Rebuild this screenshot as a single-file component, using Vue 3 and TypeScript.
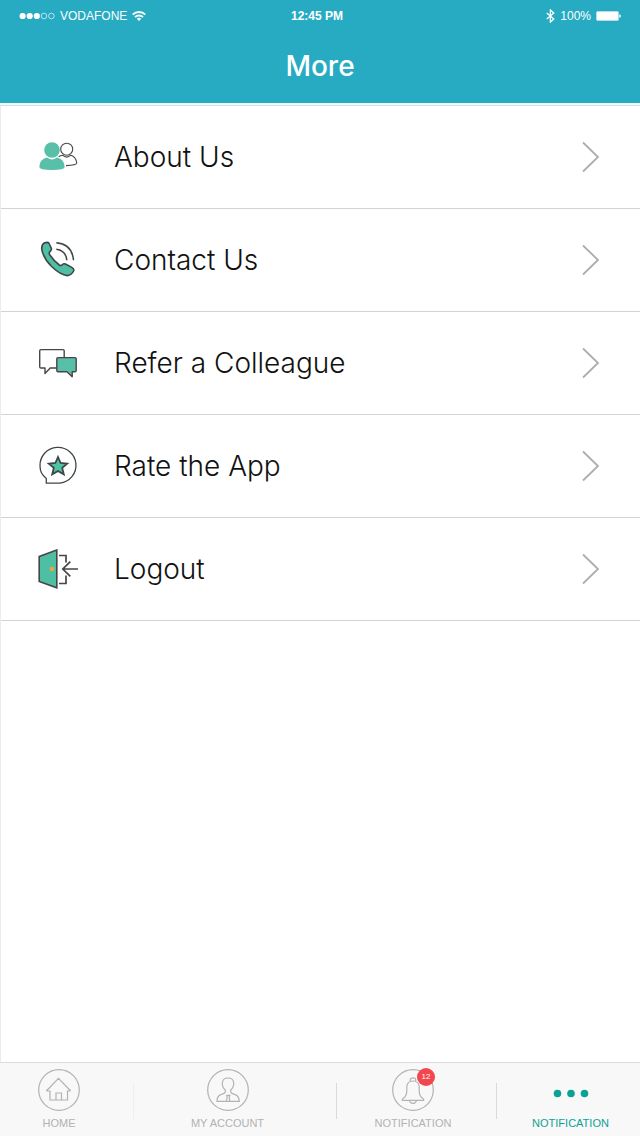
<script setup lang="ts">
import { ref } from 'vue'

type IconName = 'people' | 'phone' | 'chat' | 'star' | 'door'
type TabIcon = 'home' | 'account' | 'bell' | 'more'

interface MenuItem {
  label: string
  icon: IconName
}

interface Tab {
  id: string
  label: string
  icon: TabIcon
  badge?: number
}

const menu: MenuItem[] = [
  { label: 'About Us', icon: 'people' },
  { label: 'Contact Us', icon: 'phone' },
  { label: 'Refer a Colleague', icon: 'chat' },
  { label: 'Rate the App', icon: 'star' },
  { label: 'Logout', icon: 'door' },
]

const tabs: Tab[] = [
  { id: 'home', label: 'HOME', icon: 'home' },
  { id: 'account', label: 'MY ACCOUNT', icon: 'account' },
  { id: 'notification', label: 'NOTIFICATION', icon: 'bell', badge: 12 },
  { id: 'more', label: 'NOTIFICATION', icon: 'more' },
]

const activeTab = ref<string>('more')
</script>

<template>
  <div class="screen">
    <header class="header">
      <div class="status">
        <div class="status-side">
          <svg class="signal" width="36" height="8" viewBox="0 0 36 8" aria-hidden="true">
            <g fill="#fff">
              <circle cx="3.6" cy="4" r="3.1" />
              <circle cx="10.7" cy="4" r="3.1" />
              <circle cx="17.8" cy="4" r="3.1" />
            </g>
            <g fill="none" stroke="#d5f3f8" stroke-width="0.8">
              <circle cx="25" cy="4" r="2.8" />
              <circle cx="32.4" cy="4" r="2.8" />
            </g>
          </svg>
          <span>VODAFONE</span>
          <svg width="14" height="10" viewBox="0 0 14 10" aria-hidden="true">
            <g fill="none" stroke="#fff" stroke-width="1.9">
              <path d="M0.7 3.7 C4.2 0.1 9.8 0.1 13.3 3.7" />
              <path d="M3 6.2 C5.2 3.9 8.8 3.9 11 6.2" />
            </g>
            <path d="M4.8 7.7 Q7 5.9 9.2 7.7 L7 10 Z" fill="#fff" />
          </svg>
        </div>
        <time class="clock">12:45 PM</time>
        <div class="status-side status-end">
          <svg width="9" height="14" viewBox="0 0 9 14" aria-hidden="true">
            <path d="M0.8 4 L7.8 10 L4.4 13 V1 L7.8 4 L0.8 10" fill="none" stroke="#fff" stroke-width="1.3" />
          </svg>
          <span>100%</span>
          <svg width="25" height="10" viewBox="0 0 25 10" aria-hidden="true">
            <rect x="0.5" y="0.5" width="22" height="9" rx="1" fill="#fff" stroke="#b9e6ee" stroke-width="0.7" />
            <path d="M23.3 3.2 Q25 3.6 25 5 Q25 6.4 23.3 6.8 Z" fill="#fff" />
          </svg>
        </div>
      </div>
      <h1 class="title">More</h1>
    </header>

    <main class="content">
      <ul class="menu">
        <li v-for="item in menu" :key="item.label">
          <button type="button" class="row">
            <svg class="row-icon" width="40" height="40" viewBox="0 0 40 40" aria-hidden="true">
              <g v-if="item.icon === 'people'">
                <g fill="none" stroke="#4a4a4a" stroke-width="1.1">
                  <circle cx="28.7" cy="12.2" r="6" />
                  <path d="M20.7 19.7 Q22.4 18.4 24.5 18.2 Q28.7 22 32.8 18.2 Q37.8 19.4 38.8 26 Q38.7 28.2 28 28.6" />
                </g>
                <path
                  d="M1.3 30 Q1.4 22.2 9.2 20.6 Q14 24.4 18.9 20.6 Q26.4 22.2 26.7 30 Q26.7 32.9 14 32.9 Q1.3 32.9 1.3 30 Z"
                  fill="#58bfa8"
                  stroke="#fff"
                  stroke-width="1"
                  paint-order="stroke"
                />
                <circle cx="14" cy="13" r="7.8" fill="#58bfa8" />
              </g>
              <g v-else-if="item.icon === 'phone'" stroke="#3f4649" stroke-linejoin="round">
                <path
                  d="M6.7 2.8 L9.2 2.4 Q10.8 2.4 11.5 4.2 L13.4 8.5 Q13.8 9.8 12.4 11.2 Q10.6 12.8 11.5 14.5 Q15.5 20.5 21.3 25 Q22.7 26 24.2 24.8 Q25.8 23.2 27.4 24 L33.8 27.4 Q36.5 28.9 35.6 31 Q33.5 35 29.4 35.6 Q22.5 35 13.6 26.5 Q4.7 17.5 3.7 8.6 Q3.6 4.4 6.7 2.8 Z"
                  fill="#4fbfa3"
                  stroke-width="1.6"
                />
                <path d="M18.3 9.2 Q28 10.4 28.8 20.3 M18.3 2.8 Q34.2 4.2 35.5 20.3" fill="none" stroke-width="1.5" />
              </g>
              <g v-else-if="item.icon === 'chat'" stroke="#4b4447" stroke-width="1.4" stroke-linejoin="round">
                <path d="M19 25 H12.2 L7 30.4 V25 H3 Q1.7 25 1.7 23.7 V7.7 Q1.7 6.6 3 6.6 H25 Q26.2 6.6 26.2 7.7 V14.4" fill="none" />
                <path
                  d="M20 14.6 H37 Q38.2 14.6 38.2 15.8 V27.4 Q38.2 28.7 37 28.7 H34.2 V33.7 L29 28.7 H20 Q18.8 28.7 18.8 27.4 V15.8 Q18.8 14.6 20 14.6 Z"
                  fill="#58bfa8"
                />
              </g>
              <g v-else-if="item.icon === 'star'" stroke="#3f4649">
                <path d="M8.3 37.2 V32.4 Q2 27.7 2 20 A18 18 0 1 1 22 37.2 Z" fill="none" stroke-width="1.3" />
                <path
                  d="M20 11 L22.6 17 L29.2 17.6 L24.2 21.9 L25.8 28.4 L20 25 L14.2 28.4 L15.8 21.9 L10.8 17.6 L17.4 17 Z"
                  fill="#4fc3a4"
                  stroke-width="1.8"
                />
              </g>
              <g v-else stroke="#474446">
                <path d="M1.2 7.4 L18.8 1 V38.8 L1.2 32.5 Z" fill="#4fbfa3" stroke-width="1.6" />
                <circle cx="14" cy="20" r="2.3" fill="#efa33c" stroke="none" />
                <path
                  d="M21 6.5 H28 V13.5 M21 34.5 H28 V26.5 M40 20 H25.5 M32.3 12.6 L24.8 20 L32.3 27.3"
                  fill="none"
                  stroke-width="1.7"
                />
              </g>
            </svg>
            <span class="row-label">{{ item.label }}</span>
            <svg class="chevron" width="18" height="32" viewBox="0 0 18 32" aria-hidden="true">
              <path d="M1 1.5 L16 16 L1 30.5" fill="none" stroke="#adadad" stroke-width="1.8" />
            </svg>
          </button>
        </li>
      </ul>
    </main>

    <nav class="tabbar" aria-label="Main">
      <ul class="tabs">
        <li v-for="tab in tabs" :key="tab.id" class="tab-cell">
          <button
            type="button"
            class="tab"
            :class="{ active: activeTab === tab.id }"
            :aria-current="activeTab === tab.id ? 'page' : undefined"
            @click="activeTab = tab.id"
          >
            <span class="tab-icon">
              <svg width="42" height="42" viewBox="0 0 42 42" aria-hidden="true">
                <g v-if="tab.icon === 'more'" fill="currentColor">
                  <circle cx="7.5" cy="24.5" r="3.8" />
                  <circle cx="21" cy="24.5" r="3.8" />
                  <circle cx="34.5" cy="24.5" r="3.8" />
                </g>
                <g v-else fill="none" stroke="currentColor" stroke-width="1.2">
                  <circle cx="21" cy="21" r="20.3" />
                  <path
                    v-if="tab.icon === 'home'"
                    d="M9.3 21 L20.5 9.3 L31.7 21 M9 20 V22 H12 V31 H29.5 V22 H32 V20 M18 31 V24 H23.5 V31"
                  />
                  <path
                    v-else-if="tab.icon === 'account'"
                    d="M18.3 22.9 V21 C16.5 19.5 15.2 17 15.3 14 C15.5 10.8 17.8 9 21 9 C24.3 9 26.6 10.8 26.7 14 C26.8 17 25.5 19.5 23.7 21 V22.9 Q24.4 24.6 28.2 25.6 Q32 27 32.3 32.3 H10 Q10 27 13.8 25.6 Q17.6 24.6 18.3 22.9 Z M19.5 26.3 H22.9 L22.2 28.3 L22.9 32 M19.5 26.3 L20.2 28.3 L19.5 32"
                  />
                  <path
                    v-else
                    d="M18.3 12.2 Q17.7 8.8 21 8.8 Q24.3 8.8 23.7 12.2 M10.3 31.4 Q10 29.9 11.3 29.3 Q14.6 27.2 14.8 22 V18 C15 13.8 17.5 12 21 12 C24.5 12 27 13.8 27.2 18 V22 Q27.4 27.2 30.7 29.3 Q32 29.9 31.7 31.4 Z M17.7 31.8 Q18 34.4 21 34.4 Q24 34.4 24.3 31.8"
                  />
                </g>
              </svg>
              <span v-if="tab.badge" class="badge">{{ tab.badge }}</span>
            </span>
            <span class="tab-label">{{ tab.label }}</span>
          </button>
        </li>
      </ul>
    </nav>
  </div>
</template>

<style>
body {
  margin: 0;
  background: #fff;
}
</style>

<style scoped>
.screen {
  display: flex;
  flex-direction: column;
  min-height: 100vh;
  background: #fff;
  font-family: 'Liberation Sans', Arial, sans-serif;
}

ul {
  margin: 0;
  padding: 0;
  list-style: none;
}

button {
  margin: 0;
  border: 0;
  background: none;
  font: inherit;
  color: inherit;
  cursor: pointer;
}

svg {
  display: block;
  flex: none;
}

.header {
  padding-bottom: 16px;
  border-bottom: 1px solid #d3e0e6;
  background: #26abc3;
  box-shadow: inset 0 -2px #f3fafc;
  color: #fff;
}

.status {
  display: grid;
  grid-template-columns: 1fr auto 1fr;
  align-items: center;
  height: 32px;
  padding: 0 19px;
  font-size: 12px;
  line-height: 16px;
}

.status-side {
  display: flex;
  align-items: center;
  gap: 5px;
}

.status-end {
  justify-content: flex-end;
}

.clock {
  padding-right: 6px;
  font-weight: 700;
}

.title {
  margin: 18px 0 6px;
  font-family: Inter, sans-serif;
  font-size: 28px;
  font-weight: 500;
  line-height: 33px;
  text-align: center;
}

.content {
  flex: 1;
  border-left: 1px solid #ececec;
}

.row {
  display: flex;
  align-items: center;
  width: 100%;
  height: 103px;
  padding: 0 40px 0 37px;
  border-bottom: 1px solid #d3d3d3;
  text-align: left;
}

.row-label {
  flex: 1;
  padding-left: 36px;
  color: #111;
  font-family: Inter, sans-serif;
  font-size: 28px;
  font-weight: 300;
  line-height: 36px;
}

.tabbar {
  border-top: 1px solid #dcdcdc;
  background: #f8f8f8;
}

.tabs {
  display: grid;
  grid-template-columns: 134fr 203fr 160fr 143fr;
  height: 73px;
}

.tab-cell {
  display: flex;
  padding-right: 16px;
  background: linear-gradient(#dadada, #dadada) right 20px / 1px 36px no-repeat;
}

.tab-cell:first-child {
  background-image: linear-gradient(#eee, #eee);
}

.tab-cell:nth-child(3) {
  padding-right: 8px;
}

.tab-cell:last-child {
  padding: 0 0 0 4px;
  background: none;
}

.tab {
  display: flex;
  flex: 1;
  flex-direction: column;
  align-items: center;
  gap: 5px;
  padding: 6px 0 0;
  color: #b2b2b2;
}

.tab.active {
  color: #0ba296;
}

.tab-icon {
  position: relative;
}

.tab-label {
  font-size: 11px;
  line-height: 14px;
  white-space: nowrap;
}

.badge {
  position: absolute;
  top: -1px;
  right: -1px;
  width: 18px;
  height: 18px;
  border-radius: 50%;
  background: #f2474f;
  color: #fff;
  font-size: 8px;
  line-height: 18px;
  text-align: center;
}
</style>
